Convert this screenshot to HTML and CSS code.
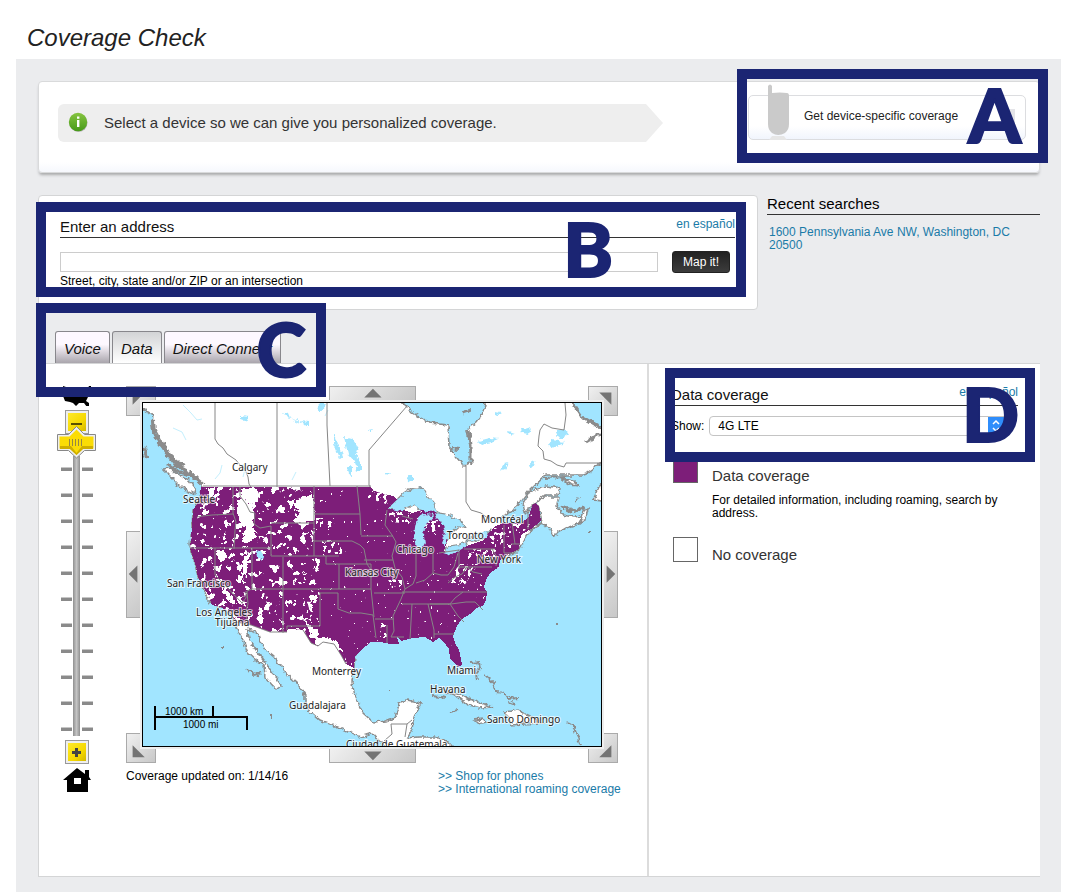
FILE: index.html
```html
<!DOCTYPE html>
<html lang="en">
<head>
<meta charset="UTF-8">
<meta name="viewport" content="width=device-width, initial-scale=1">
<title>Coverage Check</title>
<link rel="stylesheet" href="styles.css">
</head>
<body>

<h1>Coverage Check</h1>

<main class="page">

<section class="device-card">
    <p class="device-tip">
        <svg class="info-icon" width="20" height="20" viewBox="0 0 20 20" aria-hidden="true">
            <defs><linearGradient id="green" x1="0" y1="0" x2="0" y2="1"><stop offset="0" stop-color="#86c440"/><stop offset="1" stop-color="#479a1a"/></linearGradient></defs>
            <circle cx="10.5" cy="10.8" r="9" fill="#a9aaa6"/>
            <circle cx="10" cy="10" r="9.2" fill="url(#green)"/>
            <path d="M9 4.5h2.4v2.2H9zM9 8h2.4v7H9z" fill="#fff"/>
        </svg>
        Select a device so we can give you personalized coverage.
    </p>
    <button class="device-btn" type="button">
        <svg class="phone" width="22" height="56" viewBox="0 0 22 56" aria-hidden="true">
            <path d="M1 2q2-3 4 0v7q8-1 15 0 2 0 2 3v28q0 6-4 9-7 4-13 0-4-3-4-9z" fill="#cacaca"/>
            <path d="M5 52h12l3 4H2z" fill="#e6e6e6"/>
        </svg>
        Get device-specific coverage
        <span class="device-more"></span>
    </button>
    <div class="mark mark-a">A</div>
</section>

<div class="search-row">
    <form class="address-card">
        <div class="section-head">
            <label for="address">Enter an address</label>
            <a href="#">en español</a>
        </div>
        <div class="address-line">
            <input id="address" type="text">
            <button class="map-btn" type="button">Map it!</button>
        </div>
        <p class="hint">Street, city, state and/or ZIP or an intersection</p>
        <div class="mark mark-b">B</div>
    </form>
    <aside class="recent">
        <h2>Recent searches</h2>
        <a href="#">1600 Pennsylvania Ave NW, Washington, DC 20500</a>
    </aside>
</div>

<div class="tabs">
    <button type="button">Voice</button>
    <button type="button" class="active">Data</button>
    <button type="button">Direct Connect</button>
    <div class="mark mark-c">C</div>
</div>

<div class="panel">
    <section class="map-side">
        <div class="zoom">
            <button type="button" class="plain" aria-label="Whole country">
                <svg width="30" height="20" viewBox="0 0 30 20"><path d="M1 0l3 1h12l3 2 4 1 3-2 1-2h2v3l-3 4v4l-2 4 3 2v3l-2 1-3-4-5 0-3 3-3-3-3-1-5-1-2-5z"/></svg>
            </button>
            <button type="button" class="step" aria-label="Zoom out">
                <svg width="15" height="15" viewBox="0 0 15 15"><path d="M2 8h11v2H2z" fill="#5a5000"/></svg>
            </button>
            <input class="slider" type="range" min="0" max="11" value="0" aria-label="Zoom level">
            <button type="button" class="step" aria-label="Zoom in">
                <svg width="15" height="15" viewBox="0 0 15 15"><path d="M6 3h3v3h3v3H9v3H6V9H3V6h3z" fill="#444"/></svg>
            </button>
            <button type="button" class="plain" aria-label="Home">
                <svg width="28" height="25" viewBox="0 0 28 25"><path fill-rule="evenodd" d="M14 0l8 6V2h4v7l2 3h-3v12H4V12H0zM11 10v6h7v-6z"/></svg>
            </button>
        </div>

        <div class="map-col">
            <div class="map-frame">
                <button type="button" class="pan nw" aria-label="Pan north-west"><svg viewBox="0 0 30 30"><path d="M6 6h13L6 19z"/></svg></button>
                <button type="button" class="pan n" aria-label="Pan north"><svg viewBox="0 0 87 15"><path d="M34 12L44 2l10 10z"/></svg></button>
                <button type="button" class="pan ne" aria-label="Pan north-east"><svg viewBox="0 0 30 30"><path d="M11 6h13v13z"/></svg></button>
                <button type="button" class="pan w" aria-label="Pan west"><svg viewBox="0 0 15 87"><path d="M12 33v20L2 43z"/></svg></button>
                <button type="button" class="pan e" aria-label="Pan east"><svg viewBox="0 0 15 87"><path d="M3 33v20l10-10z"/></svg></button>
                <button type="button" class="pan sw" aria-label="Pan south-west"><svg viewBox="0 0 30 30"><path d="M6 12v13h13z"/></svg></button>
                <button type="button" class="pan s" aria-label="Pan south"><svg viewBox="0 0 87 15"><path d="M34 3h20L44 13z"/></svg></button>
                <button type="button" class="pan se" aria-label="Pan south-east"><svg viewBox="0 0 30 30"><path d="M11 25h13V12z"/></svg></button>

                <svg class="map" viewBox="143 403 458 343" role="img" aria-label="Data coverage map">
                    <defs>
                        <path id="usa" d="M201 487H370L373 490 381 493 393 496 397 499 387 509 400 509 412 513 424 509 436 511 438 518 449 530 447 541 444 551 449 555 464 547 484 540 487 534 494 527 503 523 521 523 528 518 533 504 536 503 539 507 541 521 531 529 521 535 519 549 509 554 500 560 499 567 490 573 486 580 484 587 487 592 486 600 483 606 476 608 470 614 462 619 457 626 453 636 455 643 459 650 461 659 462 665 458 667 454 663 450 658 449 649 444 642 439 638 433 642 425 637 413 638 401 641 397 637 399 644 390 644 380 642 371 642 361 650 355 657 354 668 346 664 341 655 334 644 323 642 318 646 311 643 303 630 288 629 287 632 270 632 251 625 236 622 231 613 221 607 212 605 209 596 203 587 198 577 195 563 190 549 192 527 193 510 199 501z"/>
                        <path id="lakes" d="M388 508L397 500 404 493 412 488 423 489 427 496 433 503 437 511 428 512 418 509 414 504 407 507 400 511zM417 518L424 514 434 515 429 521 425 528 424 536 425 543 420 552 416 548 414 537 415 527zM435 513L448 515 460 520 464 527 459 525 450 533 445 547 441 542 445 533 443 524 437 518zM442 552L452 546 460 545 468 541 464 547 451 555zM468 540L476 535 490 531 487 537 472 542z"/>
                        <clipPath id="inUsa"><use href="#usa"/></clipPath>
                        <clipPath id="west"><path d="M185 480h128l2 34 0 27 5 20 0 65-20 10H185z"/></clipPath>
                        <filter id="rough" filterUnits="userSpaceOnUse" x="143" y="403" width="458" height="343" color-interpolation-filters="sRGB">
                            <feTurbulence type="fractalNoise" baseFrequency=".2" numOctaves="3" seed="4"/>
                            <feDisplacementMap in="SourceGraphic" scale="6" xChannelSelector="R" yChannelSelector="G"/>
                        </filter>
                        <filter id="gapsWest" filterUnits="userSpaceOnUse" x="185" y="480" width="150" height="160">
                            <feTurbulence type="fractalNoise" baseFrequency=".14" numOctaves="4" seed="12"/>
                            <feColorMatrix values="0 0 0 0 1  0 0 0 0 1  0 0 0 0 1  40 0 0 0 -25"/>
                        </filter>
                        <filter id="gapsEast" filterUnits="userSpaceOnUse" x="310" y="480" width="235" height="190">
                            <feTurbulence type="fractalNoise" baseFrequency=".3" numOctaves="2" seed="7"/>
                            <feColorMatrix values="0 0 0 0 1  0 0 0 0 1  0 0 0 0 1  40 0 0 0 -30"/>
                        </filter>
                        <filter id="gapsDense" filterUnits="userSpaceOnUse" x="310" y="480" width="235" height="190">
                            <feTurbulence type="fractalNoise" baseFrequency=".25" numOctaves="2" seed="9"/>
                            <feColorMatrix values="0 0 0 0 1  0 0 0 0 1  0 0 0 0 1  40 0 0 0 -23"/>
                        </filter>
                        <clipPath id="dense"><path d="M366 488h26l-6 16-18-6zM388 512h25l-3 12-18-2zM425 520h15v12h-15zM488 528h24v20h-20zM512 524h18l-10 12h-8zM468 549h28v10h-28zM446 582l14-18 18 0-14 22zM316 518h18l-4 12h-14zM322 540h20v14h-20zM388 580h14v10h-14zM380 623h8v14h-8zM312 638h20l16 24-8 4z"/></clipPath>
                    </defs>

                    <path d="M143 403h458v343H143z" fill="#a1e5ff"/>

                    <g filter="url(#rough)">
                        <!-- mainland -->
                        <path class="land" d="M130 395L143 409 153 415 152 424 157 433 163 444 171 457 181 468 192 477 203 487 199 501 193 510 192 527 190 545 195 563 198 577 203 587 209 603 221 607 232 613 236 627 243 640 248 653 257 661 264 665 265 677 276 689 281 685 274 675 269 668 264 660 256 650 250 641 247 629 257 632 260 642 266 650 275 658 283 670 297 683 305 695 305 707 320 720 340 728 360 737 372 733 384 746 390 760H470L452 746 447 741 435 737 420 737 407 738 412 729 414 717 421 703 407 700 399 703 395 718 387 721 373 722 363 713 355 697 352 682 354 668 355 657 365 640 430 600 490 570 500 560 519 549 531 529 542 523 540 511 537 503 542 497 559 497 557 506 563 515 575 517 585 515 578 524 566 528 553 536 549 527 541 523 500 530 502 517 517 507 529 491 546 475 584 475 600 464 620 455V440L601 428 583 418 573 406 570 390H485V403L483 413 477 422 467 430 470 447 471 462 464 466 457 458 449 447 448 425 430 423 413 413 403 403V390z"/>
                        <!-- islands -->
                        <path class="land" d="M163 469l8-1 8 7 10 5 7 9-1 5-13-6zM523 503l7-12 15-5 15 2-2 7-13 0-12 10-8 8zM561 478l12 3 5 5-7-1zM579 524l5-12 4-4-2 11zM593 500l6-13 5-6v20zM446 692l12 1 10 6 8 2 17 6-14 1-12-4-10-8zM505 712l13-2 14 7 10 6-18 1-12 1zM474 720l8-1 5 3-9 2z"/>
                        <use href="#lakes" fill="#a1e5ff" stroke="#8b8b8b" stroke-width="2"/>
                        <path class="isles" d="M153 420l1 13 5 10 8 10 9 12 11 6 7 6 9 8M161 440l8 15 8 7 8 3" stroke-width="4"/>
                        <path class="isles" d="M469 430l2 14 0 18M168 464l11 8 16 4M143 447l4 11M462 413l9-3M573 404l8 12 20 12M586 442l10-6 6-3M561 506l10 5 14-3" stroke-width="3"/>
                        <path class="isles" d="M471 663l8-1 1 6-4 5 1 8M484 675l9 8 3 9 8 1 4 6 10-1M508 702l8 3M432 696l15 2M450 713l8-2M568 722l5 3 3 8 2 4 3 9M262 673l-8 2-8-6M388 691h3M556 624h2M222 648h3M270 716h2M588 532h3M575 503l4-6M451 448l8 1M545 478l20-1" stroke-width="2"/>
                    </g>

                    <g filter="url(#rough)" fill="#a1e5ff">
                        <path d="M344 437l8 2 6 8-2 7 5 9 0 8-4 1-2-10-7-8zM334 432l4 12 5 12-3 2-6-14zM283 412l5 2 2 5-3-1zM290 418l8 3 10 6M283 413l6 8M300 420l9 1 0 4-5 0zM240 416l8 1-2 4-6-1zM319 403h7l-5 8h-4zM347 468l5-3 0 10-3-1zM556 431l8-2 4 6-10 4zM552 440l12 2-8 6-8-2zM522 429l9-3-3 8-5-1zM478 441l12-3 8 1-7 3-10 2zM500 471l5-8 4-1-4 7zM531 461l4 2-2 5-3-3zM508 431l6 2-5 1zM385 472l5 0-3 3zM408 476l5-1 0 7-4-1zM495 412l6 1-5 3zM368 430l5-1-3 4z"/>
                        <path d="M144 414l6 2-1 8-5 2z"/>
                    </g>
                    <g fill="none" stroke="#c4effd">
                        <path d="M183 405l8 8 6 7 5-1M173 428l9 4 4 8M222 465l-2 8-5 6M243 464l2 5-2 8M292 480l4-8M328 410l-3 6"/>
                    </g>
                    <path class="borders" d="M215 403v36l3 5 5 4 4 6 9 6 4 5 5 4 3 8 1 7 3 5M277 403v84M327 403v22l3 61M407 406l-38 44v35l4 7M466 465v37l5 8 10 3 8 6M565 403l1 12-2 15-12-2-8-4-4 6-1 6-1 10 5 5 1 8 7 2 6 4 7 2 2-4h35M203 486h168M384 741l8-7-1-10h16l-2 13M407 724l5-4"/>

                    <g class="coverage">
                        <use href="#usa" fill="#7d1e79"/>
                        <g clip-path="url(#inUsa)">
                            <g clip-path="url(#west)"><path d="M185 480h150v160H185z" filter="url(#gapsWest)"/></g>
                            <path d="M310 480h235v190H310z" filter="url(#gapsEast)"/>
                            <g clip-path="url(#dense)"><path d="M310 480h235v190H310z" filter="url(#gapsDense)"/></g>
                            <g filter="url(#rough)" fill="#fff">
                                <path d="M240 488h15l4 8-3 8-9-2zM237 500l7-1 8 8 2 9-1 10 3 12-8 6-5-2 2-14-6-8zM294 504l7-7 10-2 3 7 1 20-18 1-5-3 9-8zM208 488h7l-2 8-4 3zM292 510l-5-8 8-3zM202 513l6-4-2 8zM216 552l8-4 2 10-5 5zM246 549l4 12-4 14-5-2zM237 576l6-2-1 10-5-2zM222 588l10 8 3 8-6-2zM311 594l7 2-3 6-5-1zM305 622l10 6 5 8-9 2zM315 640l8-3 13 4 6 10-9-2-9-5-9 3z"/>
                            </g>
                        </g>
                    </g>
                    <g filter="url(#rough)"><use href="#lakes" fill="#a1e5ff"/><path d="M256 551l5 1 3 6-3 2-4-4z" fill="#a1e5ff"/></g>

                    <!-- state lines -->
                    <path class="borders" d="M197 517l6-1 9-1 21-1M233 487v26l3 9-1 8-1 19M240 487l0 9 6 8 4 8 5 1-1 11 6 4 11-2 0 30M190 548h81M271 523h43M314 486v70M314 514h46M314 541h38l8 4 4 4 3 15 4 6v8M271 556h68M326 556v8H371M215 548v27l27 28 4-5 0-7M252 548v41l-5 2 1 13-3 11 5 9M252 589h119M283 557v76M339 564v25M357 486l3 28 1 21M361 536h32M387 510l-2 15 7 10 4 7-4 14 3 12 7 9 3 12-4 10-8 17 1 15-3 6h13M364 560h29M371 564v25M320 593h18v16l11 4 12 0 12 2 3 23M320 593v33h-33v4M371 589l3 28M374 593h31M375 619h19M416 552v24l-3 8-8 5M433 552v21l8 2 7 0 6-8 4-14M416 583l9-3 8-7M402 592h85M402 604h48l5-6 8-6M412 604l-2 35M428 604l6 26v8M430 604h20l8 12 6 6M434 634h20M451 604l15-2 9 0 8 8M459 550v19M459 567h33M464 549h31M448 583l7-6 7-3 5-7 6 5 9 2M492 549l5 8-1 9M504 525v28M504 553h14M512 522l3 22M528 529v-22M511 544h9M402 516l11 3M439 553l20-3M387 643v-18M236 622l15 3 19 7 17 0M303 630l8 13 7 3 5-4 11 2 7 11 5 9"/>

                    <g class="scale">
                        <path d="M155 706v24M155 717h92v13M213 717v-11" fill="none" stroke="#000" stroke-width="2"/>
                        <text x="165" y="715">1000 km</text>
                        <text x="183" y="728">1000 mi</text>
                    </g>
                    <g class="cities">
                        <text x="232" y="471">Calgary</text>
                        <text x="183" y="503">Seattle</text>
                        <text x="167" y="587">San Francisco</text>
                        <text x="196" y="616">Los Angeles</text>
                        <text x="215" y="626">Tijuana</text>
                        <text x="481" y="523">Montréal</text>
                        <text x="447" y="539">Toronto</text>
                        <text x="396" y="553">Chicago</text>
                        <text x="477" y="563">New York</text>
                        <text x="345" y="576">Kansas City</text>
                        <text x="312" y="675">Monterrey</text>
                        <text x="447" y="674">Miami</text>
                        <text x="430" y="693">Havana</text>
                        <text x="289" y="709">Guadalajara</text>
                        <text x="487" y="723">Santo Domingo</text>
                        <text x="346" y="748">Ciudad de Guatemala</text>
                    </g>
                </svg>
            </div>
            <div class="map-foot">
                <span>Coverage updated on: 1/14/16</span>
                <div class="map-links">
                    <a href="#">&gt;&gt; Shop for phones</a>
                    <a href="#">&gt;&gt; International roaming coverage</a>
                </div>
            </div>
        </div>
    </section>

    <section class="legend">
        <div class="section-head">
            <h2>Data coverage</h2>
            <a href="#">en español</a>
        </div>
        <div class="show-line">
            <label for="show">Show:</label>
            <select id="show"><option>4G LTE</option></select>
        </div>
        <div class="legend-item">
            <span class="swatch covered"></span>
            <div>
                <h3>Data coverage</h3>
                <p>For detailed information, including roaming, search by address.</p>
            </div>
        </div>
        <div class="legend-item">
            <span class="swatch"></span>
            <div><h3>No coverage</h3></div>
        </div>
        <div class="mark mark-d">D</div>
    </section>
</div>

</main>
</body>
</html>
```
FILE: styles.css
```css
* { box-sizing: border-box; }

body {
    margin: 0;
    font-family: "Liberation Sans", Arial, sans-serif;
    font-size: 12px;
    line-height: 13px;
    color: #111;
    background: #fff;
}

h1, h2, h3, p { margin: 0; font-weight: normal; }
h1 {
    padding: 24px 27px 7px;
    font-size: 24px;
    line-height: 28px;
    font-style: italic;
    color: #222;
}
h2, .section-head label { font-size: 15px; line-height: 18px; }
h3 { font-size: 15px; line-height: 18px; color: #333; }

a { color: #1a7ba8; text-decoration: none; }
button, input, select { font-family: inherit; }
button { cursor: pointer; }

.page {
    margin: 0 18px 0 16px;
    padding: 22px 21px 15px 22px;
    background: #ebecee;
}

/* device card */
.device-card {
    position: relative;
    display: flex;
    justify-content: space-between;
    align-items: flex-start;
    height: 92px;
    padding: 13px 13px 0 19px;
    border: 1px solid #d9dadb;
    border-radius: 4px;
    background: linear-gradient(#fff 80px, #f6f8fd);
    box-shadow: 0 3px 3px -1px #a9aaab;
}
.device-tip {
    display: flex;
    align-items: center;
    flex: 0 1 605px;
    height: 38px;
    margin-top: 9px;
    padding: 0 0 2px 10px;
    border-radius: 6px 0 0 6px;
    background: #eee;
    clip-path: polygon(0 0, calc(100% - 17px) 0, 100% 50%, calc(100% - 17px) 100%, 0 100%);
    font-size: 15px;
    color: #333;
}
.info-icon { margin-right: 16px; }
.device-btn {
    display: flex;
    align-items: center;
    width: 278px;
    height: 45px;
    padding: 0 10px 4px 18px;
    border: 1px solid #dcdde0;
    border-radius: 5px;
    background: linear-gradient(#fff 70%, #f1f5fd);
    font-size: 12px;
    color: #222;
}
.phone { margin: -8px 15px 0 0; }
.device-more { width: 12px; height: 14px; margin-left: auto; background: #e4e4e8; }

/* address search */
.search-row {
    display: grid;
    grid-template-columns: 1fr 273px;
    gap: 9px;
    margin-top: 22px;
}
.address-card {
    position: relative;
    height: 115px;
    padding: 22px 22px 0 21px;
    border: 1px solid #d4d5d6;
    border-radius: 4px;
    background: #fff;
}
.section-head {
    display: flex;
    justify-content: space-between;
    padding-bottom: 1px;
    border-bottom: 1px solid #333;
    color: #111;
}
.address-line { display: flex; gap: 14px; margin-top: 13px; padding-right: 5px; }
.address-line input {
    flex: 1;
    min-width: 0;
    height: 20px;
    margin-top: 1px;
    border: 1px solid #ccc;
    background: #fff;
}
.map-btn {
    width: 58px;
    height: 22px;
    padding: 0;
    border: 1px solid #222;
    border-radius: 3px;
    background: linear-gradient(#222, #3c3c3c);
    color: #fff;
    font-size: 12px;
}
.hint { margin-top: 2px; color: #000; }
.recent h2 { padding-bottom: 1px; border-bottom: 1px solid #333; color: #000; }
.recent a { display: block; margin: 11px 2px 0; }

/* tabs */
.tabs {
    position: relative;
    display: flex;
    gap: 2px;
    margin-top: 21px;
    padding-left: 17px;
}
.tabs button {
    height: 32px;
    padding: 2px 8px 0;
    border: 1px solid #88878c;
    border-bottom: 0;
    border-radius: 3px 3px 0 0;
    background: linear-gradient(#fdf8ff 40%, #a9a5ac);
    font-size: 15px;
    font-style: italic;
    color: #111;
}
.tabs .active { background: linear-gradient(#d3d4d6, #fff); }

/* panel */
.panel {
    display: grid;
    grid-template-columns: 610px 1fr;
    min-height: 514px;
    border: 1px solid #d4d5d6;
    border-right: 0;
    background: #fff;
}
.map-side {
    display: flex;
    align-items: flex-start;
    padding: 22px 0 0 18px;
    border-right: 2px solid #dcdcdc;
}

/* zoom control */
.zoom {
    display: flex;
    flex-direction: column;
    align-items: center;
    width: 39px;
    margin-right: 30px;
}
.plain { padding: 0; border: 0; background: none; line-height: 0; }
.step {
    width: 24px;
    height: 24px;
    padding: 0;
    border: 1px solid #999;
    background: linear-gradient(135deg, #ffec33, #f5d800 60%, #c9ae00);
    box-shadow: inset 0 0 0 2px #eee;
    line-height: 0;
}
.plain + .step { margin-top: 4px; }
.step + .plain { margin-top: 4px; }
.slider {
    position: relative;
    appearance: none;
    -webkit-appearance: none;
    writing-mode: vertical-lr;
    width: 39px;
    height: 310px;
    margin: -8px 0 4px;
    background:
        linear-gradient(90deg, #909090, #c4c4c4 50%, #909090) 16px 30px / 7px 280px no-repeat,
        url('data:image/svg+xml,<svg xmlns="http://www.w3.org/2000/svg" width="39" height="26"><path d="M4 0h11v4H4zM25 0h11v4H25z" fill="%238a8a8a"/><path d="M4 0h11v1H4zM25 0h11v1H25z" fill="%23c6c6c6"/></svg>') 0 41px / 39px 26px repeat-y;
    background-clip: border-box;
}
.slider::-webkit-slider-runnable-track { width: 39px; background: none; }
.slider::-webkit-slider-thumb {
    -webkit-appearance: none;
    width: 39px;
    height: 33px;
    border: 0;
    background: url('data:image/svg+xml,<svg xmlns="http://www.w3.org/2000/svg" width="39" height="33"><path d="M.5 8.500H11.500L19.500.5 27.500 8.500H38.500V24.500H27.500L19.500 32 11.500 24.500H.5z" fill="%23eee" stroke="%23888"/><path d="M2.500 10.500H12.500L19.500 3.500 26.500 10.500H36.500V22.500H26.500L19.500 29 12.500 22.500H2.500z" fill="%23fbdc05"/><path d="M3 20h11l5.500 7 5.500-7h11v3h-10l-6.500 6-6.500-6H3z" fill="%23cfae00"/><path d="M12.500 13v7M15.500 13v7M18.500 13v7M21.500 13v7M24.500 13v7" stroke="%23948647"/></svg>') no-repeat;
}

/* map with its pan buttons */
.map-frame {
    display: grid;
    grid-template-columns: 30px 1fr 87px 1fr 30px;
    grid-template-rows: 30px 1fr 87px 1fr 30px;
    width: 492px;
    height: 377px;
}
.pan {
    padding: 0;
    border: 1px solid #aaa;
    background: linear-gradient(135deg, #f0f0f0, #c8c8c8);
    line-height: 0;
}
.pan svg { display: block; width: 100%; height: 100%; fill: #747474; }
.nw { grid-area: 1 / 1; }
.n { grid-area: 1 / 3; height: 15px; }
.ne { grid-area: 1 / 5; }
.w { grid-area: 3 / 1; width: 15px; }
.e { grid-area: 3 / 5; width: 15px; justify-self: end; }
.sw { grid-area: 5 / 1; }
.s { grid-area: 5 / 3; height: 15px; align-self: end; }
.se { grid-area: 5 / 5; }
.map {
    grid-area: 1 / 1 / -1 / -1;
    z-index: 1;
    width: 460px;
    height: 345px;
    margin: 16px;
    border: 1px solid #000;
    outline: 2px solid #eee;
}
.land { fill: #fff; stroke: #8b8b8b; stroke-width: 1.5px; }
.isles { fill: none; stroke: #8b8b8b; }
.borders { fill: none; stroke: #868686; stroke-width: 1px; }
.coverage { shape-rendering: crispEdges; }
.scale text { font-size: 10px; }
.cities text {
    font-family: "Noto Sans", sans-serif;
    font-size: 10px;
    fill: #222;
    stroke: #fff;
    stroke-opacity: .7;
    stroke-width: 2px;
    paint-order: stroke;
}
.map-foot { display: flex; margin-top: 7px; color: #000; }
.map-foot span { flex: 0 0 312px; }
.map-links a { display: block; }

/* legend */
.legend { position: relative; padding: 22px 22px 0 22px; }
.show-line { display: flex; align-items: center; gap: 5px; margin-top: 10px; color: #000; }
.show-line select {
    flex: 0 1 298px;
    appearance: none;
    height: 20px;
    padding: 0 8px;
    border: 1px solid #c4c4c4;
    border-radius: 4px;
    background: #fff url('data:image/svg+xml,<svg xmlns="http://www.w3.org/2000/svg" width="18" height="20"><path d="M0 0h18v20H0z" fill="%232f8dfb"/><path d="M5 8l3-3 3 3M5 12l3 3 3-3" fill="none" stroke="white" stroke-width="1.500"/></svg>') right center no-repeat;
    font-size: 12px;
    color: #000;
}
.legend-item { display: flex; gap: 14px; margin: 22px 0 0 2px; }
.legend-item + .legend-item { margin-top: 17px; }
.legend-item h3 { margin-top: 9px; }
.legend-item p { max-width: 300px; margin-top: 9px; color: #000; }
.swatch { flex: 0 0 25px; height: 25px; border: 1px solid #666; background: #fff; }
.covered { background: #7d1e79; }

/* lettered call-outs laid over the page */
.mark {
    position: absolute;
    z-index: 2;
    display: flex;
    justify-content: flex-end;
    align-items: center;
    height: 94px;
    padding-bottom: 4px;
    border: 10px solid #1b2573;
    font-family: Lato, sans-serif;
    font-size: 75px;
    font-weight: 900;
    line-height: 76px;
    color: #1b2573;
    -webkit-text-stroke: 2px #1b2573;
    pointer-events: none;
}
.mark-a { top: -13px; right: -9px; width: 311px; padding-right: 17px; }
.mark-b { top: 6px; left: -3px; width: 710px; height: 95px; padding-right: 123px; }
.mark-c { top: -28px; left: -2px; width: 290px; padding-right: 10px; }
.mark-d { top: 4px; left: 16px; width: 370px; padding-right: 6px; }
```
